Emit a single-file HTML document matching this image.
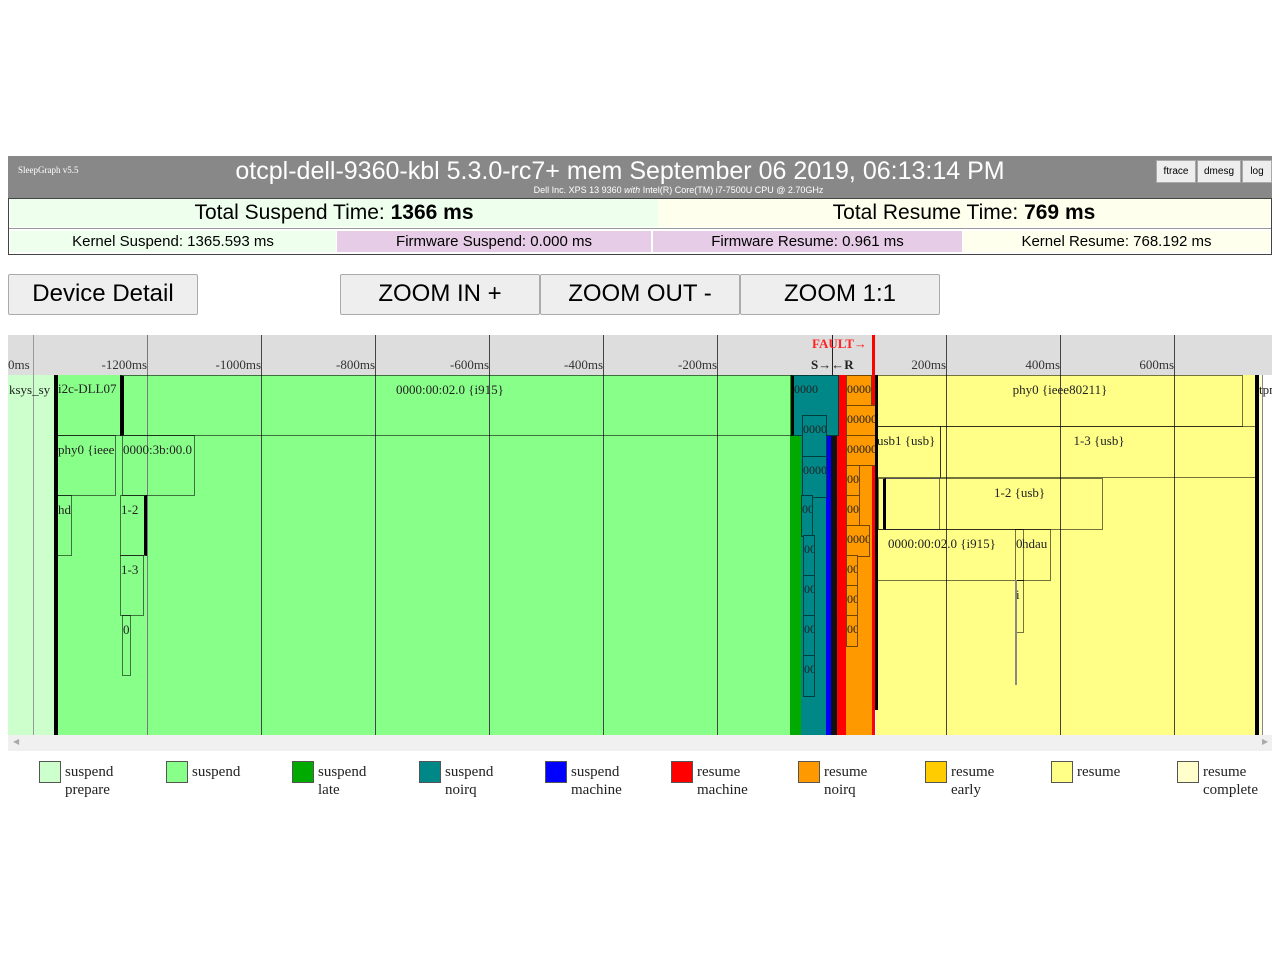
<!DOCTYPE html>
<html><head><meta charset="utf-8"><style>
*{margin:0;padding:0;box-sizing:border-box}
body{width:1280px;height:960px;background:#fff;position:relative;font-family:"Liberation Sans",sans-serif;overflow:hidden}
.a{position:absolute}
.btn{position:absolute;background:#eee;border:1px solid #aaa;border-radius:2px;font-size:24px;text-align:center;line-height:38px;color:#000}
.serif{font-family:"Liberation Serif",serif}
.d{position:absolute;border:1px solid rgba(0,0,0,.55);font-family:"Liberation Serif",serif;font-size:13px;color:#222;overflow:hidden;white-space:nowrap;padding-top:6px}
.g{position:absolute;top:335px;height:400px;width:1px;background:#444}
.lbl{position:absolute;top:357px;font-family:"Liberation Serif",serif;font-size:13px;color:#333;text-align:right;width:100px}
.lg{position:absolute;top:763px;font-family:"Liberation Serif",serif;font-size:15px;line-height:18px;color:#222}
.lg i{position:absolute;left:0;top:-2px;width:22px;height:22px;border:1px solid #555}
.lg span{position:absolute;left:26px;top:0;white-space:nowrap}
</style></head><body>
<div class="a" style="left:8px;top:156px;width:1264px;height:42px;background:#888"></div>
<div class="a serif" style="left:18px;top:165px;font-size:9px;color:#fff">SleepGraph v5.5</div>
<div class="a" style="left:0;width:1240px;top:157px;text-align:center;font-size:25px;color:#fff">otcpl-dell-9360-kbl 5.3.0-rc7+ mem September 06 2019, 06:13:14 PM</div>
<div class="a" style="left:0;width:1357px;top:185px;text-align:center;font-size:9px;color:#fff">Dell Inc. XPS 13 9360 <i>with</i> Intel(R) Core(TM) i7-7500U CPU @ 2.70GHz</div>
<div class="a" style="left:1156px;top:160px;width:40px;height:23px;background:#eee;border:1px solid #aaa;font-size:10px;text-align:center;line-height:22px">ftrace</div>
<div class="a" style="left:1197px;top:160px;width:44px;height:23px;background:#eee;border:1px solid #aaa;font-size:10px;text-align:center;line-height:22px">dmesg</div>
<div class="a" style="left:1242px;top:160px;width:30px;height:23px;background:#eee;border:1px solid #aaa;font-size:10px;text-align:center;line-height:22px">log</div>
<div class="a" style="left:8px;top:198px;width:1264px;height:57px;border:1px solid #444;background:#fff"></div>
<div class="a" style="left:10px;top:199px;width:648px;height:28px;background:#eeffee;font-size:21px;text-align:center;line-height:28px">Total Suspend Time: <b>1366 ms</b></div>
<div class="a" style="left:658px;top:199px;width:612px;height:28px;background:#ffffee;font-size:21px;text-align:center;line-height:28px">Total Resume Time: <b>769 ms</b></div>
<div class="a" style="left:9px;top:228px;width:1262px;height:1px;background:#999"></div>
<div class="a" style="left:10px;top:231px;width:326px;height:21px;background:#eeffee;font-size:15px;text-align:center;line-height:21px">Kernel Suspend: 1365.593 ms</div>
<div class="a" style="left:337px;top:231px;width:314px;height:21px;background:#e6cce6;font-size:15px;text-align:center;line-height:21px">Firmware Suspend: 0.000 ms</div>
<div class="a" style="left:653px;top:231px;width:309px;height:21px;background:#e6cce6;font-size:15px;text-align:center;line-height:21px">Firmware Resume: 0.961 ms</div>
<div class="a" style="left:963px;top:231px;width:307px;height:21px;background:#ffffee;font-size:15px;text-align:center;line-height:21px">Kernel Resume: 768.192 ms</div>
<div class="btn" style="left:8px;top:274px;width:190px;height:41px">Device Detail</div>
<div class="btn" style="left:340px;top:274px;width:200px;height:41px">ZOOM IN +</div>
<div class="btn" style="left:540px;top:274px;width:200px;height:41px">ZOOM OUT -</div>
<div class="btn" style="left:740px;top:274px;width:200px;height:41px">ZOOM 1:1</div>
<div class="a" style="left:8px;top:335px;width:1264px;height:40px;background:#ddd"></div>
<div class="a" style="left:8px;top:375px;width:1264px;height:360px;background:#fff"></div>
<div class="a" style="left:8px;top:735px;width:1264px;height:16px;background:#f0f0f0"></div>
<div class="a" style="left:13px;top:737px;font-size:8px;color:#aaa">&#9664;</div>
<div class="a" style="left:1262px;top:737px;font-size:8px;color:#aaa">&#9654;</div>
<div class="a" style="left:8px;top:375px;width:46px;height:360px;background:#ccffcc"></div>
<div class="a" style="left:54px;top:375px;width:736px;height:360px;background:#88ff88"></div>
<div class="a" style="left:790px;top:375px;width:11px;height:360px;background:#00aa00"></div>
<div class="a" style="left:801px;top:375px;width:25px;height:360px;background:#008888"></div>
<div class="a" style="left:826px;top:375px;width:5px;height:360px;background:#0000ff"></div>
<div class="a" style="left:831px;top:375px;width:6px;height:360px;background:#111"></div>
<div class="a" style="left:837px;top:375px;width:9px;height:360px;background:#ff0000"></div>
<div class="a" style="left:846px;top:375px;width:27px;height:360px;background:#ff9900"></div>
<div class="a" style="left:876px;top:375px;width:379px;height:360px;background:#ffff88"></div>
<div class="a" style="left:1255px;top:375px;width:4px;height:360px;background:#000"></div>
<div class="a" style="left:1259px;top:375px;width:4px;height:360px;background:#ffffcc;border-right:1px solid #888"></div>
<div class="g" style="left:33px;background:#999"></div>
<div class="g" style="left:147px;background:#777"></div>
<div class="g" style="left:261px"></div>
<div class="g" style="left:375px"></div>
<div class="g" style="left:489px"></div>
<div class="g" style="left:603px"></div>
<div class="g" style="left:717px"></div>
<div class="a" style="left:832px;top:335px;width:1px;height:40px;background:#222"></div>
<div class="g" style="left:946px"></div>
<div class="g" style="left:1060px"></div>
<div class="g" style="left:1174px"></div>
<div class="a" style="left:872px;top:335px;width:3px;height:400px;background:#ff0000"></div>
<div class="lbl" style="left:47px">-1200ms</div>
<div class="lbl" style="left:161px">-1000ms</div>
<div class="lbl" style="left:275px">-800ms</div>
<div class="lbl" style="left:389px">-600ms</div>
<div class="lbl" style="left:503px">-400ms</div>
<div class="lbl" style="left:617px">-200ms</div>
<div class="lbl" style="left:846px">200ms</div>
<div class="lbl" style="left:960px">400ms</div>
<div class="lbl" style="left:1074px">600ms</div>
<div class="a serif" style="left:8px;top:357px;font-size:13px;color:#333">0ms</div>
<div class="a serif" style="left:812px;top:336px;font-size:13px;font-weight:bold;color:#ff2222">FAULT→</div>
<div class="a serif" style="left:811px;top:357px;font-size:13px;font-weight:bold;color:#222">S→←R</div>
<div class="a serif" style="left:9px;top:382px;font-size:13px;color:#222">ksys_sy</div>
<div class="d" style="left:54px;top:375px;width:68px;height:61px;border-width:0 0 1px 4px;border-color:#000 #000 rgba(0,0,0,.55) #000">i2c-DLL07</div>
<div class="d" style="left:120px;top:375px;width:672px;height:61px;border-left:4px solid #000;padding-left:272px">0000:00:02.0 {i915}</div>
<div class="a" style="left:54px;top:435px;width:4px;height:300px;background:#000"></div>
<div class="d" style="left:58px;top:435px;width:58px;height:61px;border-left:0">phy0 {ieee</div>
<div class="d" style="left:122px;top:435px;width:73px;height:61px">0000:3b:00.0</div>
<div class="d" style="left:58px;top:495px;width:14px;height:61px;border-left:0">hd</div>
<div class="d" style="left:120px;top:495px;width:27px;height:61px;border-right:3px solid #000">1-2</div>
<div class="d" style="left:120px;top:555px;width:24px;height:61px">1-3</div>
<div class="d" style="left:122px;top:615px;width:9px;height:61px">0</div>
<div class="d" style="left:791px;top:375px;width:48px;height:61px;font-size:12px;background:#008888;border-left:3px solid #000">0000</div>
<div class="d" style="left:802px;top:415px;width:25px;height:42px;font-size:12px;background:#008888">0000</div>
<div class="d" style="left:802px;top:456px;width:25px;height:42px;font-size:12px;background:#008888">0000</div>
<div class="d" style="left:801px;top:495px;width:12px;height:42px;font-size:12px;background:#008888">00</div>
<div class="d" style="left:803px;top:535px;width:12px;height:42px;font-size:12px;background:#008888">00</div>
<div class="d" style="left:803px;top:575px;width:12px;height:42px;font-size:12px;background:#008888">00</div>
<div class="d" style="left:803px;top:615px;width:12px;height:42px;font-size:12px;background:#008888">00</div>
<div class="d" style="left:803px;top:655px;width:12px;height:42px;font-size:12px;background:#008888">00</div>
<div class="d" style="left:846px;top:375px;width:26px;height:42px;font-size:12px;background:#ff9900">0000</div>
<div class="d" style="left:846px;top:405px;width:30px;height:31px;font-size:12px;background:#ff9900">00000</div>
<div class="d" style="left:846px;top:435px;width:30px;height:31px;font-size:12px;background:#ff9900">00000</div>
<div class="d" style="left:846px;top:465px;width:14px;height:32px;font-size:12px;background:#ff9900">00</div>
<div class="d" style="left:846px;top:495px;width:14px;height:32px;font-size:12px;background:#ff9900">00</div>
<div class="d" style="left:846px;top:525px;width:24px;height:32px;font-size:12px;background:#ff9900">0000</div>
<div class="d" style="left:846px;top:555px;width:12px;height:32px;font-size:12px;background:#ff9900">00</div>
<div class="d" style="left:846px;top:585px;width:12px;height:32px;font-size:12px;background:#ff9900">00</div>
<div class="d" style="left:846px;top:615px;width:12px;height:32px;font-size:12px;background:#ff9900">00</div>
<div class="a" style="left:875px;top:375px;width:3px;height:335px;background:#000"></div>
<div class="d" style="left:877px;top:375px;width:366px;height:52px;text-align:center">phy0 {ieee80211}</div>
<div class="d" style="left:877px;top:426px;width:64px;height:52px;border-left:0">usb1 {usb}</div>
<div class="d" style="left:940px;top:426px;width:317px;height:52px;text-align:center;border-right:0">1-3 {usb}</div>
<div class="d" style="left:878px;top:478px;width:8px;height:52px;border-right:3px solid #000"></div>
<div class="d" style="left:939px;top:478px;width:164px;height:52px;text-align:left;padding-left:54px">1-2 {usb}</div>
<div class="a" style="left:886px;top:478px;width:54px;height:1px;background:#555"></div>
<div class="a" style="left:886px;top:529px;width:54px;height:1px;background:#555"></div>
<div class="d" style="left:877px;top:529px;width:174px;height:52px;padding-left:11px;border-left:0">0000:00:02.0 {i915}</div>
<div class="d" style="left:1015px;top:529px;width:9px;height:52px;font-size:13px">0</div>
<div class="a serif" style="left:1022px;top:536px;font-size:13px;color:#222">hdau</div>
<div class="d" style="left:1015px;top:580px;width:9px;height:53px">i</div>
<div class="a" style="left:1015px;top:580px;width:2px;height:105px;background:#888"></div>
<div class="a serif" style="left:1259px;top:382px;font-size:13px;color:#222;width:13px;overflow:hidden">tpm</div>
<div class="lg" style="left:39px"><i style="background:#ccffcc"></i><span>suspend<br>prepare</span></div>
<div class="lg" style="left:166px"><i style="background:#88ff88"></i><span>suspend</span></div>
<div class="lg" style="left:292px"><i style="background:#00aa00"></i><span>suspend<br>late</span></div>
<div class="lg" style="left:419px"><i style="background:#008888"></i><span>suspend<br>noirq</span></div>
<div class="lg" style="left:545px"><i style="background:#0000ff"></i><span>suspend<br>machine</span></div>
<div class="lg" style="left:671px"><i style="background:#ff0000"></i><span>resume<br>machine</span></div>
<div class="lg" style="left:798px"><i style="background:#ff9900"></i><span>resume<br>noirq</span></div>
<div class="lg" style="left:925px"><i style="background:#ffcc00"></i><span>resume<br>early</span></div>
<div class="lg" style="left:1051px"><i style="background:#ffff88"></i><span>resume</span></div>
<div class="lg" style="left:1177px"><i style="background:#ffffcc"></i><span>resume<br>complete</span></div>
</body></html>
